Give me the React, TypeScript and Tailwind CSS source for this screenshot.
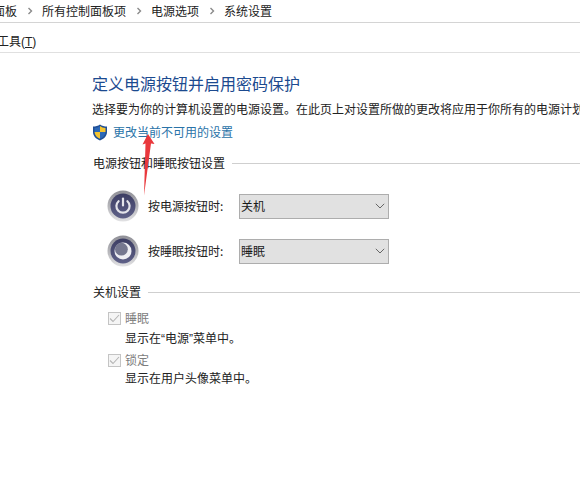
import React from "react";

const Sep = () => (
  <svg width="6" height="8" viewBox="0 0 6 8" className="mx-[9.5px] shrink-0">
    <path d="M1.5 1 L4.5 4 L1.5 7" fill="none" stroke="#8a8a8a" strokeWidth="1.4" />
  </svg>
);

const Shield = () => (
  <svg width="16" height="17" viewBox="0 0 16 17" className="shrink-0">
    <path d="M8 .5 C10 2 12.5 2.6 15 2.6 V8 C15 12 12 15 8 16.5 C4 15 1 12 1 8 V2.6 C3.5 2.6 6 2 8 .5Z" fill="#1f4f96" />
    <path d="M8 2 V8 H2.5 V4 C4.5 4 6.5 3.2 8 2Z" fill="#2b68b8" />
    <path d="M8 2 C9.5 3.2 11.5 4 13.5 4 V8 H8Z" fill="#f4c430" />
    <path d="M2.5 8 H8 V14.8 C5 13.6 2.8 11.2 2.5 8Z" fill="#f4c430" />
    <path d="M8 8 H13.5 C13.2 11.2 11 13.6 8 14.8Z" fill="#2b68b8" />
  </svg>
);

const Disc = ({ id, children }: { id: string; children: React.ReactNode }) => (
  <svg width="32" height="32" viewBox="0 0 32 32" className="shrink-0">
    <defs>
      <linearGradient id={id + "r"} x1="0" y1="0" x2="0" y2="1">
        <stop offset="0" stopColor="#8f8f96" />
        <stop offset="0.55" stopColor="#b9b9bd" />
        <stop offset="1" stopColor="#e2e2e4" />
      </linearGradient>
      <linearGradient id={id + "f"} x1="0" y1="0" x2="0" y2="1">
        <stop offset="0" stopColor="#3c3d63" />
        <stop offset="1" stopColor="#5f6188" />
      </linearGradient>
    </defs>
    <circle cx="16" cy="16" r="15.5" fill={`url(#${id}r)`} />
    <circle cx="16" cy="16" r="12.5" fill={`url(#${id}f)`} />
    {children}
  </svg>
);

const Select = ({ value }: { value: string }) => (
  <div className="ml-[14px] flex h-[25px] w-[150px] items-center justify-between border border-[#adadad] bg-[#e1e1e1] pl-[1px] pr-[3px] text-[12px] text-[#1a1a1a]">
    <span>{value}</span>
    <svg width="10" height="6" viewBox="0 0 10 6">
      <path d="M.8 .8 L5 5 L9.2 .8" fill="none" stroke="#666" strokeWidth="1" />
    </svg>
  </div>
);

const SectionHead = ({ label, mt }: { label: string; mt: string }) => (
  <div className={`flex h-[18px] items-center ${mt}`}>
    <span className="pl-[1px] text-[12px] text-[#222]">{label}</span>
    <div className="ml-[7px] h-px flex-1 bg-[#cfcfcf]" />
  </div>
);

const Check = ({ title, note, mt, noteMt }: { title: string; note: React.ReactNode; mt: string; noteMt: string }) => (
  <div className={`ml-[16px] ${mt}`}>
    <div className="flex h-[20px] items-center">
      <div className="flex h-[13px] w-[13px] items-center justify-center border border-[#c4c4c4] bg-[#f5f5f5]">
        <svg width="11" height="9" viewBox="0 0 11 9">
          <path d="M1 4.5 L4 7.5 L10 1" fill="none" stroke="#b5b5b5" strokeWidth="1.1" />
        </svg>
      </div>
      <span className="ml-[4px] text-[12px] text-[#7d7d7d]">{title}</span>
    </div>
    <div className={`ml-[17px] h-[20px] text-[12px] leading-[20px] text-[#222] ${noteMt}`}>{note}</div>
  </div>
);

const Q = ({ c }: { c: string }) => <span className="font-['Liberation_Sans']">{c}</span>;

export default function App() {
  return (
    <div
      className="relative h-[496px] w-[580px] overflow-hidden bg-white text-[12px]"
      style={{ fontFamily: '"Noto Sans CJK SC", "Noto Sans", sans-serif' }}
    >
      <div className="flex h-[23px] items-center whitespace-nowrap border-b border-[#d4d4d4] text-[12px] text-[#222]">
        <span className="-ml-[7px]">面板</span>
        <Sep />
        <span>所有控制面板项</span>
        <Sep />
        <span>电源选项</span>
        <Sep />
        <span>系统设置</span>
      </div>
      <div className="flex h-[30px] items-center whitespace-nowrap border-b border-[#e0e0e0] pt-[8px] text-[12px] text-[#222]">
        <span className="-ml-[3px]">
          工具<span className="font-['Liberation_Sans']">(<span className="underline">T</span>)</span>
        </span>
      </div>

      <div className="pl-[92px]">
        <h1 className="mt-[19px] h-[22px] whitespace-nowrap text-[16px] font-normal leading-[22px] text-[#1c4a8f]">
          定义电源按钮并启用密码保护
        </h1>
        <p className="mt-[5px] h-[20px] whitespace-nowrap text-[12px] leading-[20px] text-[#222]">
          选择要为你的计算机设置的电源设置。在此页上对设置所做的更改将应用于你所有的电源计划。
        </p>
        <div className="mt-[3px] flex h-[20px] items-center">
          <Shield />
          <span className="ml-[5px] text-[12px] text-[#2a73a8]">更改当前不可用的设置</span>
        </div>

        <SectionHead label="电源按钮和睡眠按钮设置" mt="mt-[12px]" />

        <div className="mt-[18px] flex h-[32px] items-center pl-[15px]">
          <Disc id="p">
            <path d="M11.6 11.2 A6.6 6.6 0 1 0 20.4 11.2" fill="none" stroke="#e4e4ea" strokeWidth="2.2" strokeLinecap="round" />
            <path d="M16 8.5 V15.5" fill="none" stroke="#e4e4ea" strokeWidth="2.2" strokeLinecap="round" />
          </Disc>
          <span className="ml-[9px] w-[77px] whitespace-nowrap text-[12px] text-[#222]">按电源按钮时:</span>
          <Select value="关机" />
        </div>

        <div className="mt-[13px] flex h-[32px] items-center pl-[15px]">
          <Disc id="s">
            <circle cx="16" cy="16" r="8.5" fill="#eeeef3" />
            <circle cx="14.4" cy="14.2" r="6.4" fill="#75778f" />
          </Disc>
          <span className="ml-[9px] w-[77px] whitespace-nowrap text-[12px] text-[#222]">按睡眠按钮时:</span>
          <Select value="睡眠" />
        </div>

        <SectionHead label="关机设置" mt="mt-[16px]" />

        <Check title="睡眠" note={<>显示在<Q c="“" />电源<Q c="”" />菜单中。</>} mt="mt-[7px]" noteMt="" />
        <Check title="锁定" note="显示在用户头像菜单中。" mt="mt-[2px]" noteMt="-mt-[2px]" />
      </div>

      <svg width="24" height="70" viewBox="0 0 24 70" className="absolute left-[138px] top-[130px]">
        <path d="M10 4 L16.5 14 L13 13.5 L6 65.5 L7.5 13.5 L4.5 14.5 Z" fill="#e9383c" />
      </svg>
    </div>
  );
}
